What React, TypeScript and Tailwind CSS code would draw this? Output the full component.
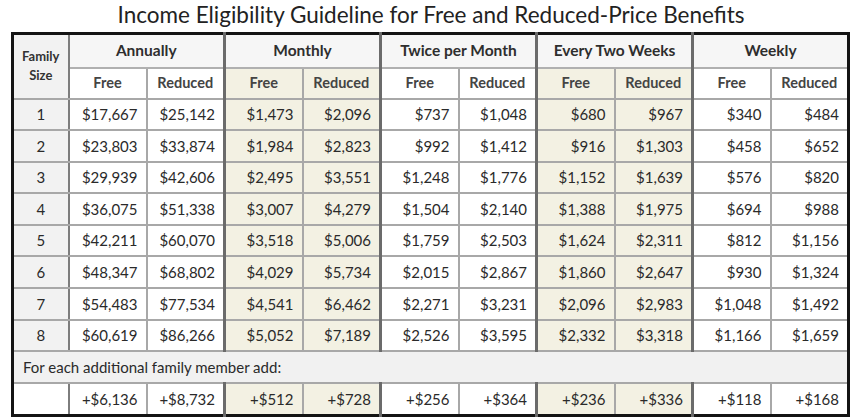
import React from 'react';

const rows = [
  ["1", "$17,667", "$25,142", "$1,473", "$2,096", "$737", "$1,048", "$680", "$967", "$340", "$484"],
  ["2", "$23,803", "$33,874", "$1,984", "$2,823", "$992", "$1,412", "$916", "$1,303", "$458", "$652"],
  ["3", "$29,939", "$42,606", "$2,495", "$3,551", "$1,248", "$1,776", "$1,152", "$1,639", "$576", "$820"],
  ["4", "$36,075", "$51,338", "$3,007", "$4,279", "$1,504", "$2,140", "$1,388", "$1,975", "$694", "$988"],
  ["5", "$42,211", "$60,070", "$3,518", "$5,006", "$1,759", "$2,503", "$1,624", "$2,311", "$812", "$1,156"],
  ["6", "$48,347", "$68,802", "$4,029", "$5,734", "$2,015", "$2,867", "$1,860", "$2,647", "$930", "$1,324"],
  ["7", "$54,483", "$77,534", "$4,541", "$6,462", "$2,271", "$3,231", "$2,096", "$2,983", "$1,048", "$1,492"],
  ["8", "$60,619", "$86,266", "$5,052", "$7,189", "$2,526", "$3,595", "$2,332", "$3,318", "$1,166", "$1,659"],
];

const extra = ["", "+$6,136", "+$8,732", "+$512", "+$728", "+$256", "+$364", "+$236", "+$336", "+$118", "+$168"];

const groups = ["Annually", "Monthly", "Twice per Month", "Every Two Weeks", "Weekly"];

// right border per column: family col, group ends, inner split
const colBorder = (i: number) => {
  if (i === 10) return "";
  if (i === 0) return "border-r-2 border-r-[#7d7d7d]";
  if (i % 2 === 0) return "border-r-[3px] border-r-[#6b6b6b]";
  return "border-r-2 border-r-[#a8a8a8]";
};

const isShaded = (i: number) => i === 3 || i === 4 || i === 7 || i === 8;

const cellBg = (i: number) => {
  if (i === 0) return "bg-[#f2f2f2]";
  if (isShaded(i)) return "bg-[#f3f1e3]";
  return "bg-white";
};

export default function App() {
  return (
    <div className="w-[856px] h-[420px] bg-white text-[#2a2a2a] font-['Lato',sans-serif] overflow-hidden">
      <h1 className="h-[32px] flex items-center justify-center text-[22.5px] leading-none text-[#222] pb-[2px] pl-[6px]">
        Income Eligibility Guideline for Free and Reduced-Price Benefits
      </h1>
      <table className="ml-[11px] w-[839px] table-fixed border-collapse border-[3px] border-[#141414] text-[15px]">
        <colgroup>
          <col className="w-[56px]" />
          {Array.from({ length: 10 }).map((_, i) => (
            <col key={i} />
          ))}
        </colgroup>
        <thead>
          <tr className="h-[34px]">
            <th
              rowSpan={2}
              className="bg-[#f2f2f2] border-r-2 border-r-[#7d7d7d] border-b-2 border-b-[#a8a8a8] text-[13px] font-bold leading-[19px] text-[#333]"
            >
              Family
              <br />
              Size
            </th>
            {groups.map((g, gi) => (
              <th
                key={g}
                colSpan={2}
                className={`bg-[#f6f6f6] border-b-2 border-b-[#b0b0b0] font-bold text-[15.5px] text-[#2e2e2e] ${gi < 4 ? "border-r-[3px] border-r-[#6b6b6b]" : ""}`}
              >
                {g}
              </th>
            ))}
          </tr>
          <tr className="h-[31px]">
            {Array.from({ length: 10 }).map((_, k) => {
              const i = k + 1;
              return (
                <th
                  key={i}
                  className={`${cellBg(i)} ${colBorder(i)} border-b-2 border-b-[#a8a8a8] font-bold text-[14.5px] text-[#444]`}
                >
                  {i % 2 === 1 ? "Free" : "Reduced"}
                </th>
              );
            })}
          </tr>
        </thead>
        <tbody>
          {rows.map((r) => (
            <tr key={r[0]} className="h-[31.6px]">
              {r.map((v, i) => (
                <td
                  key={i}
                  className={`${cellBg(i)} ${colBorder(i)} border-b-2 border-b-[#a8a8a8] ${i === 0 ? "text-center" : "text-right pr-[8px]"}`}
                >
                  {v}
                </td>
              ))}
            </tr>
          ))}
          <tr className="h-[32px]">
            <td colSpan={11} className="bg-[#f1f1f1] border-b-2 border-b-[#a8a8a8] pl-[9px] text-left">
              For each additional family member add:
            </td>
          </tr>
          <tr className="h-[32px]">
            {extra.map((v, i) => (
              <td
                key={i}
                className={`${i === 0 ? "bg-white" : cellBg(i)} ${colBorder(i)} ${i === 0 ? "" : "text-right pr-[8px]"}`}
              >
                {v}
              </td>
            ))}
          </tr>
        </tbody>
      </table>
    </div>
  );
}
